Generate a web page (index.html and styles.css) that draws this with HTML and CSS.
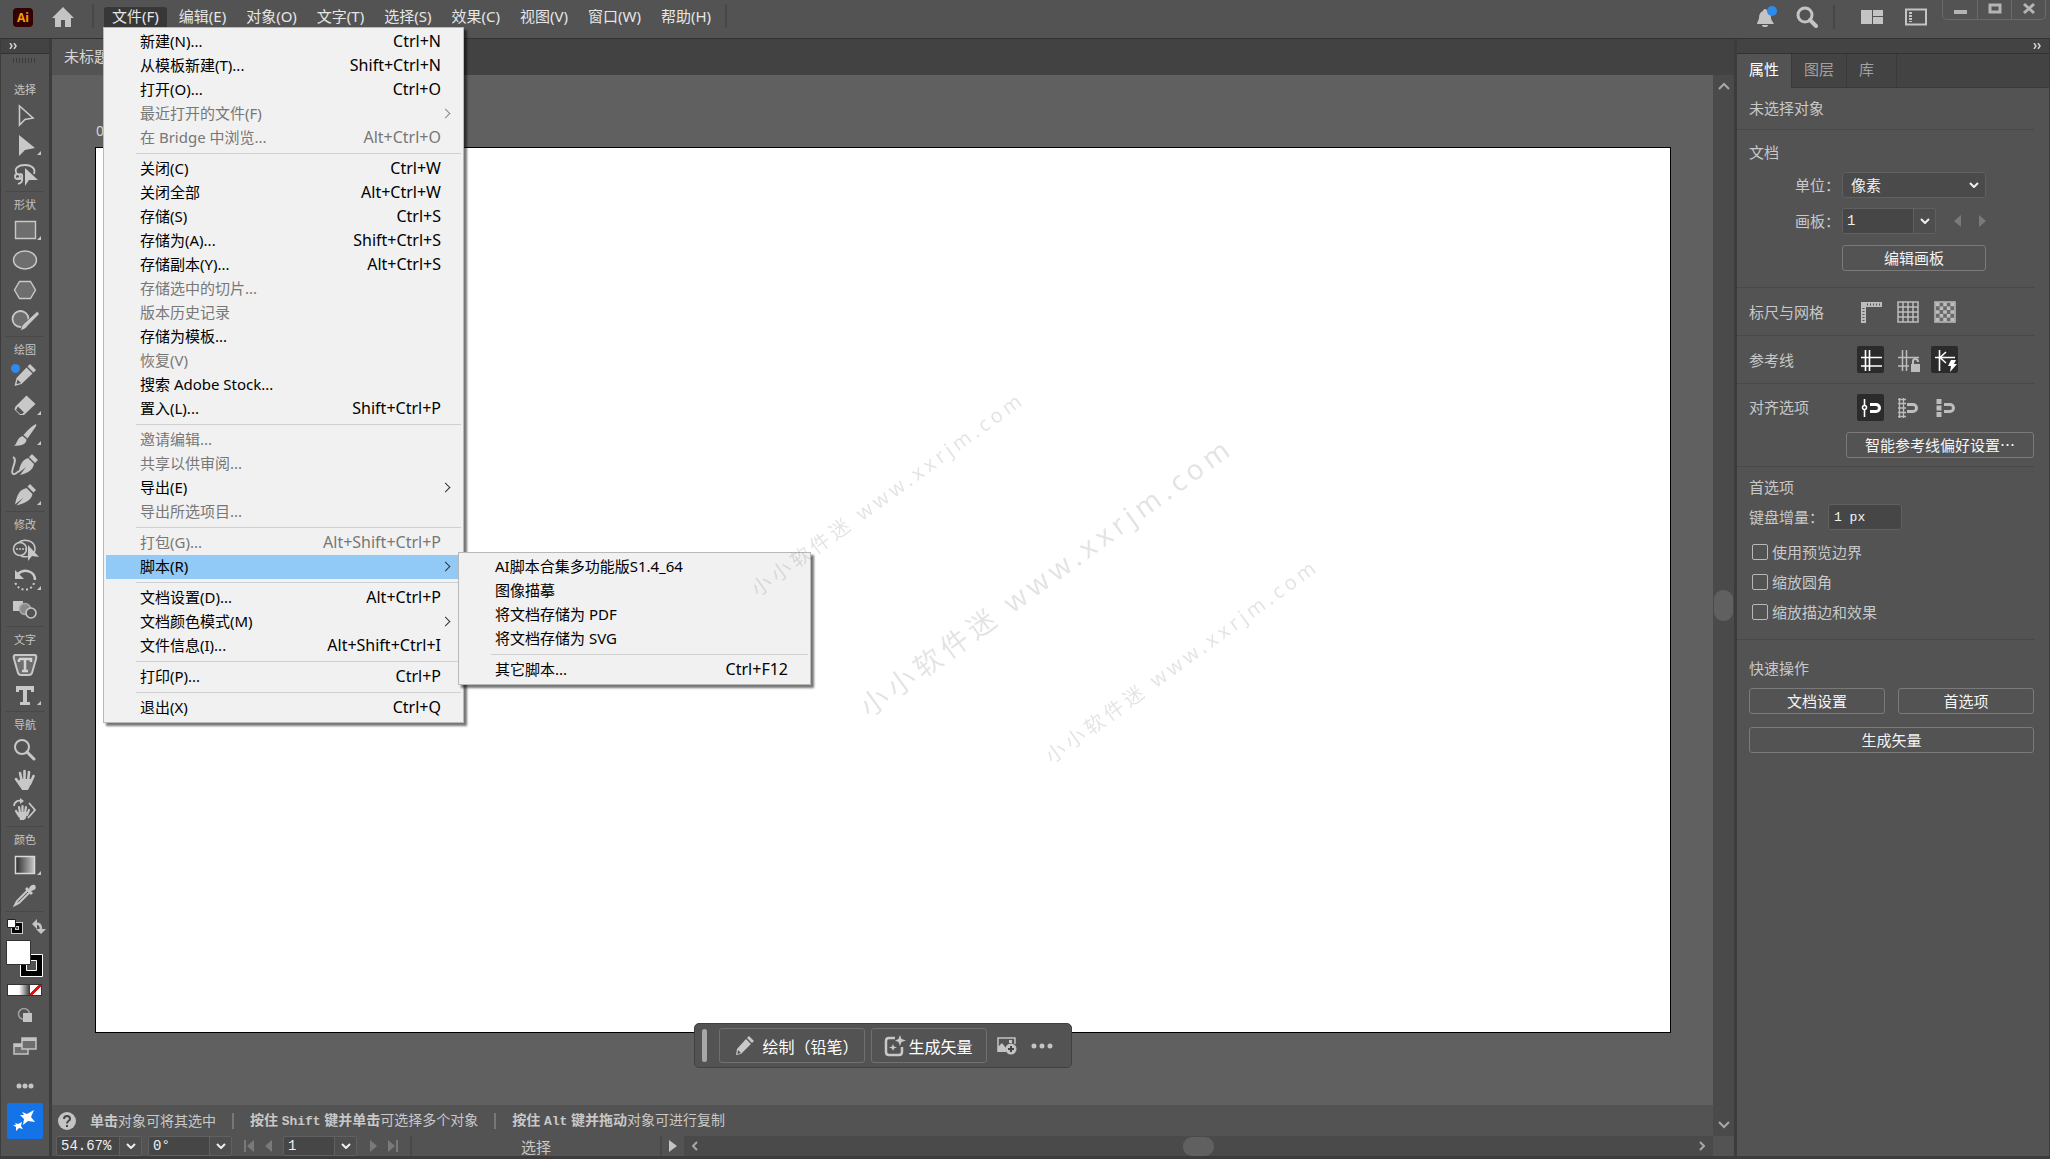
FILE: index.html
```
<!DOCTYPE html>
<html lang="zh-CN">
<head>
  <meta charset="UTF-8" />
  <meta name="viewport" content="width=device-width, initial-scale=1.0"/>
  <title>Illustrator</title>
  <link rel="stylesheet" href="styles.css">
</head>
<body>
  <header class="topbar">
    <span class="app-logo">Ai</span>
    <button class="home" aria-label="主页">
      <svg width="24" height="22" viewBox="0 0 24 22"><path d="M12 1 23 12H20V21H14V14H10V21H4V12H1Z" fill="#c4c4c4"/></svg>
    </button>
    <nav class="menubar">
      <div class="menu-root">
        <button class="menu-title open">文件(F)</button>
        <div class="menu file-menu">
          <button class="item">新建(N)...<span>Ctrl+N</span></button>
          <button class="item">从模板新建(T)...<span>Shift+Ctrl+N</span></button>
          <button class="item">打开(O)...<span>Ctrl+O</span></button>
          <button class="item sub" disabled>最近打开的文件(F)</button>
          <button class="item" disabled>在 Bridge 中浏览...<span>Alt+Ctrl+O</span></button>
          <hr>
          <button class="item">关闭(C)<span>Ctrl+W</span></button>
          <button class="item">关闭全部<span>Alt+Ctrl+W</span></button>
          <button class="item">存储(S)<span>Ctrl+S</span></button>
          <button class="item">存储为(A)...<span>Shift+Ctrl+S</span></button>
          <button class="item">存储副本(Y)...<span>Alt+Ctrl+S</span></button>
          <button class="item" disabled>存储选中的切片...</button>
          <button class="item" disabled>版本历史记录</button>
          <button class="item">存储为模板...</button>
          <button class="item" disabled>恢复(V)</button>
          <button class="item">搜索 Adobe Stock...</button>
          <button class="item">置入(L)...<span>Shift+Ctrl+P</span></button>
          <hr>
          <button class="item" disabled>邀请编辑...</button>
          <button class="item" disabled>共享以供审阅...</button>
          <button class="item sub">导出(E)</button>
          <button class="item" disabled>导出所选项目...</button>
          <hr>
          <button class="item" disabled>打包(G)...<span>Alt+Shift+Ctrl+P</span></button>
          <div class="submenu-root">
            <button class="item sub active">脚本(R)</button>
            <div class="menu script-menu">
              <button class="item">AI脚本合集多功能版S1.4_64</button>
              <button class="item">图像描摹</button>
              <button class="item">将文档存储为 PDF</button>
              <button class="item">将文档存储为 SVG</button>
              <hr>
              <button class="item">其它脚本...<span>Ctrl+F12</span></button>
            </div>
          </div>
          <hr>
          <button class="item">文档设置(D)...<span>Alt+Ctrl+P</span></button>
          <button class="item sub">文档颜色模式(M)</button>
          <button class="item">文件信息(I)...<span>Alt+Shift+Ctrl+I</span></button>
          <hr>
          <button class="item">打印(P)...<span>Ctrl+P</span></button>
          <hr>
          <button class="item">退出(X)<span>Ctrl+Q</span></button>
        </div>
      </div>
      <button class="menu-title">编辑(E)</button>
      <button class="menu-title">对象(O)</button>
      <button class="menu-title">文字(T)</button>
      <button class="menu-title">选择(S)</button>
      <button class="menu-title">效果(C)</button>
      <button class="menu-title">视图(V)</button>
      <button class="menu-title">窗口(W)</button>
      <button class="menu-title">帮助(H)</button>
    </nav>
    <div class="top-actions">
      <button class="bell" aria-label="通知">
        <svg width="22" height="24" viewBox="0 0 22 24"><path d="M9 4a2 2 0 0 1 2 2c3 1 4 4 4 7 0 2 2 4 3 6H1c0-2 2-4 2-6 0-3 1-6 4-7a2 2 0 0 1 2-2Z" fill="#c4c4c4"/><path d="M6 20h6a3 2 0 0 1-6 0Z" fill="#c4c4c4"/><circle cx="16" cy="6" r="5" fill="#2d8ceb"/></svg>
      </button>
      <button class="search" aria-label="搜索">
        <svg width="22" height="22" viewBox="0 0 22 22" fill="none" stroke="#c4c4c4"><circle cx="9" cy="9" r="7" stroke-width="3"/><path d="M14 14 20 20" stroke-width="4" stroke-linecap="round"/></svg>
      </button>
      <button aria-label="排列文档">
        <svg width="24" height="16" viewBox="0 0 24 16" fill="#c4c4c4"><path d="M1 1H12V15H1ZM13 1H23V7H13ZM13 8H23V15H13Z"/></svg>
      </button>
      <button aria-label="切换工作区">
        <svg width="22" height="18" viewBox="0 0 22 18" fill="none" stroke="#c4c4c4" stroke-width="2"><path d="M1 1.500H21V16.500H1Z"/><path d="M5.500 4V14" stroke-width="3" stroke-dasharray="2 1"/></svg>
      </button>
    </div>
    <div class="window-buttons">
      <button aria-label="最小化"><svg width="14" height="14"><path d="M1 9H14V13H1Z" fill="#b4b4b4"/></svg></button>
      <button aria-label="最大化"><svg width="14" height="14"><path d="M2 4H12V11H2Z" fill="none" stroke="#b4b4b4" stroke-width="3"/></svg></button>
      <button aria-label="关闭"><svg width="14" height="14"><path d="M2 3 12 12M12 3 2 12" stroke="#b4b4b4" stroke-width="3"/></svg></button>
    </div>
  </header>

  <div class="workspace">
    <aside class="toolbox">
      <button class="collapse" aria-label="展开工具栏"><svg width="8" height="6" viewBox="0 0 8 6" fill="none" stroke="#d0d0d0" stroke-width="1.500"><path d="M1 0 3 3 1 6M5 0 7 3 5 6"/></svg></button>
      <div class="grip"></div>

      <section class="tools">
        <h2>选择</h2>
        <button aria-label="选择工具"><svg viewBox="0 0 30 30"><path d="M9.500 6V25L15 19.500 23 18Z" fill="none" stroke="#c8c8c8" stroke-width="1.600"/></svg></button>
        <button class="more" aria-label="直接选择工具"><svg viewBox="0 0 30 30"><path d="M9 5V26L15 20 25 18Z" fill="#c8c8c8"/></svg></button>
        <button aria-label="套索工具"><svg viewBox="0 0 30 30"><g fill="none" stroke="#c8c8c8" stroke-width="1.800"><path d="M7 14C3 8 9 5 15 5s11 3 9 9"/><circle cx="7.500" cy="16.500" r="2.500"/><path d="M10 14c3 0 3 4 0 5-2 0-3-1-3-1M12 18c1 3-1 5-4 6"/></g><path d="M15 8V26L19 20 28 20Z" fill="#c8c8c8"/></svg></button>
      </section>
      <section class="tools">
        <h2>形状</h2>
        <button class="more" aria-label="矩形工具"><svg viewBox="0 0 30 30"><path d="M5.500 6.500H25.500V23.500H5.500Z" fill="#6e6e6e" stroke="#c8c8c8" stroke-width="1.400"/></svg></button>
        <button aria-label="椭圆工具"><svg viewBox="0 0 30 30"><ellipse cx="15" cy="15" rx="11.500" ry="9" fill="#6e6e6e" stroke="#c8c8c8" stroke-width="1.400"/></svg></button>
        <button aria-label="多边形工具"><svg viewBox="0 0 30 30"><path d="M9.500 6.500H20.500L25.500 15 20.500 23.500H9.500L4.500 15Z" fill="#6e6e6e" stroke="#c8c8c8" stroke-width="1.400"/></svg></button>
        <button aria-label="Shaper 工具"><svg viewBox="0 0 30 30"><circle cx="10.500" cy="14" r="8" fill="#6e6e6e" stroke="#c8c8c8" stroke-width="1.800"/><path d="M27 6.500Q29.500 7 29 9.500L18 20.500C16.500 23 14 25 10.500 25.500 11 22 12.500 19 15 17.500Z" fill="#c8c8c8" stroke="#535353" stroke-width=".8"/></svg></button>
      </section>
      <section class="tools">
        <h2>绘图</h2>
        <button aria-label="铅笔工具"><svg viewBox="0 0 30 30"><path d="M20 4 26 10 23.500 12.500 17.500 6.500ZM16.500 7.500 22.500 13.500 11.500 24 4.500 26 6.500 18Z" fill="#c8c8c8"/><path d="M7.500 19.500 11 23 6.500 24Z" fill="#535353"/><circle cx="5.500" cy="8.500" r="4.500" fill="#2d8ceb"/></svg></button>
        <button class="more" aria-label="橡皮擦工具"><svg viewBox="0 0 30 30"><path d="M16.500 5.500 25.500 14 14 25H10L4.500 19.500 5.500 16.500Z" fill="#c8c8c8"/><path d="M8 16.500 14 22.500 12 24H10L6 20Z" fill="#535353"/></svg></button>
        <button class="more" aria-label="画笔工具"><svg viewBox="0 0 30 30"><path d="M26 4Q27 5 25.500 7L17.500 18.500 13.500 15Q20 7 26 4ZM12.500 16 16.500 19.500C16.500 24 11 26.500 4 25.500 7.500 24 6.500 18 12.500 16Z" fill="#c8c8c8"/></svg></button>
        <button aria-label="曲率工具"><svg viewBox="0 0 30 30"><path d="M3 7C9 10-1 21 3 24c3 1 4-2 6-3" fill="none" stroke="#c8c8c8" stroke-width="1.800"/><path d="M22 4 28 10 25 13 19 7ZM18 8 24 14C23 20 18 23 10 25L16 17 8.500 23C10 15 12 10 18 8Z" fill="#c8c8c8"/></svg></button>
        <button class="more" aria-label="钢笔工具"><svg viewBox="0 0 30 30"><path d="M20 4 26 10 23.500 12.500 17.500 6.500ZM16.500 8 22.500 14C21.500 20 16 23 6.500 25.500L13.500 17.500 5 24.500C7 15 9 10 16.500 8Z" fill="#c8c8c8"/></svg></button>
      </section>
      <section class="tools">
        <h2>修改</h2>
        <button aria-label="形状生成器工具"><svg viewBox="0 0 30 30"><g fill="none" stroke="#c8c8c8" stroke-width="1.500"><circle cx="10" cy="14" r="6.500"/><path d="M8 8C13 3 25 5 25 14c0 7-9 9-14 7"/><path d="M6 14H20" stroke-dasharray="2 1"/></g><path d="M18 10V26L22 21 29 22Z" fill="#c8c8c8"/></svg></button>
        <button class="more" aria-label="旋转工具"><svg viewBox="0 0 30 30"><path d="M8 9C14 3 25 6 25 15" fill="none" stroke="#c8c8c8" stroke-width="2.500"/><path d="M5 5V14H14Z" fill="#c8c8c8"/><path d="M24 18C22 26 9 28 5 17" fill="none" stroke="#c8c8c8" stroke-width="2" stroke-dasharray="2 2.500"/></svg></button>
        <button aria-label="混合工具"><svg viewBox="0 0 30 30"><path d="M3 6H13V16H3Z" fill="#c8c8c8"/><circle cx="15" cy="14" r="5.500" fill="#8a8a8a" stroke="#a8a8a8" stroke-width="1.500"/><circle cx="21" cy="18" r="5" fill="#535353" stroke="#c8c8c8" stroke-width="1.600"/></svg></button>
      </section>
      <section class="tools">
        <h2>文字</h2>
        <button aria-label="修饰文字工具"><svg viewBox="0 0 30 30"><path d="M5 5H25Q27 6 26 9L22 23Q21 25 19 25H11Q9 25 8 23L4 9Q3 6 5 5Z" fill="#6e6e6e" stroke="#c8c8c8" stroke-width="2"/><path d="M9 9H21V12M9 12V9M15 9V21M12 21H18" fill="none" stroke="#d2d2d2" stroke-width="2.500"/></svg></button>
        <button class="more" aria-label="文字工具"><svg viewBox="0 0 30 30"><path d="M6 6H24V12H21V10H17V22H20V25H10V22H13V10H9V12H6Z" fill="#c8c8c8"/></svg></button>
      </section>
      <section class="tools">
        <h2>导航</h2>
        <button aria-label="缩放工具"><svg viewBox="0 0 30 30" fill="none" stroke="#c8c8c8"><circle cx="12" cy="12" r="7" stroke-width="2"/><path d="M17 17 24 24" stroke-width="3" stroke-linecap="round"/></svg></button>
        <button aria-label="抓手工具"><svg viewBox="0 0 30 30"><g stroke="#c8c8c8" stroke-width="2.600" stroke-linecap="round" fill="none"><path d="M10 8 12 17M14.500 6V16M19 7 18 17M23.500 11 20 19M6 14 11 21"/></g><path d="M10 14H21L20 21 18 25H12L8 18Z" fill="#c8c8c8"/></svg></button>
        <button aria-label="旋转视图工具"><svg viewBox="0 0 30 30"><g stroke="#c8c8c8" stroke-width="2.200" stroke-linecap="round" fill="none"><path d="M9 12 10 18M12.500 11V18M16 12 15 18M19 15 17 20M6 16 9 21"/></g><path d="M8 17H17L16 23 14 25H10Z" fill="#c8c8c8"/><path d="M4 11C4 7 8 5 11 6M19 8 25 15 18 23" fill="none" stroke="#c8c8c8" stroke-width="1.800"/><path d="M10 3 14 6 10 9Z" fill="#c8c8c8"/></svg></button>
      </section>
      <section class="tools">
        <h2>颜色</h2>
        <button class="more" aria-label="渐变工具"><svg viewBox="0 0 30 30"><defs><linearGradient id="ramp"><stop offset="0" stop-color="#2a2a2a"/><stop offset="1" stop-color="#c8c8c8"/></linearGradient></defs><path d="M5.500 6.500H24.500V23.500H5.500Z" fill="url(#ramp)" stroke="#d8d8d8" stroke-width="1.500"/></svg></button>
        <button aria-label="吸管工具"><svg viewBox="0 0 30 30"><path d="M18 10 20 12 9 23 5 25 7 21Z" fill="none" stroke="#c8c8c8" stroke-width="2"/><path d="M15 9 17 7 19 9C20 4 25 4 25.500 6S26 10 21 11L23 13 21 15Z" fill="#c8c8c8"/></svg></button>
      </section>

      <div class="swatches">
        <button class="swatch-row" aria-label="互换填色和描边"><svg width="38" height="62" viewBox="0 0 38 62"><path d="M6.500 8.500H13.500V15.500H6.500Z" fill="none" stroke="#ccc" stroke-width="5"/><path d="M6.500 8.500H13.500V15.500H6.500Z" fill="none" stroke="#000" stroke-width="3"/><path d="M.500 3.500H8.500V11.500H.500Z" fill="#fff" stroke="#222"/><path d="M27 8C33 7 34 9 34 14" fill="none" stroke="#c4c4c4" stroke-width="2.500"/><path d="M30 3V13L25 8ZM29 13H39L34 18Z" fill="#c4c4c4"/><path d="M13.500 38.500H35.500V60.500H13.500Z" fill="#000" stroke="#fff"/><path d="M19.500 44.500H29.500V54.500H19.500Z" fill="#535353" stroke="#fff"/><path d="M-.500 24.500H23.500V48.500H-.500Z" fill="#fff" stroke="#333"/></svg></button>
        <div class="color-modes">
          <button class="solid" aria-label="颜色"></button><button class="gradient" aria-label="渐变"></button><button class="none" aria-label="无"></button>
        </div>
        <button class="draw-mode" aria-label="绘图模式"><svg width="16" height="16"><circle cx="7" cy="7" r="5.500" fill="#535353" stroke="#a0a0a0" stroke-width="1.500"/><path d="M6 6H15V15H6Z" fill="#c4c4c4"/></svg></button>
        <button class="screen-mode" aria-label="更改屏幕模式"><svg width="24" height="18"><path d="M1 7H15V17H1Z" fill="#6e6e6e" stroke="#c4c4c4" stroke-width="1.500"/><path d="M1 7H15V10H1Z" fill="#c4c4c4"/><path d="M9 1H23V12H9Z" fill="#6e6e6e" stroke="#c4c4c4" stroke-width="1.500"/><path d="M9 1H23V4H9Z" fill="#c4c4c4"/></svg></button>
        <button class="edit-tools" aria-label="编辑工具栏"><svg width="18" height="6" fill="#c4c4c4"><circle cx="3" cy="3" r="2.500"/><circle cx="9" cy="3" r="2.500"/><circle cx="15" cy="3" r="2.500"/></svg></button>
      </div>
      <button class="ai-button" aria-label="生成"><svg width="24" height="24" viewBox="0 0 24 24" fill="#fff"><path d="M9 3 14 5 21 1 18 8 22 13 15 12 10 16 11 10 7 6 11 6ZM2 14 5 15 9 13 8 17 10 20 6 19 3 22 3 18 0 16 3 16Z"/></svg></button>
    </aside>

    <main class="document">
      <div class="doc-tabs"><button class="doc-tab">未标题</button></div>
      <div class="view">
        <div class="stage">
          <span class="artboard-name">0</span>
          <div class="artboard"></div>
          <div class="context-bar">
            <span class="handle"></span>
            <button class="boxed"><svg width="20" height="22" viewBox="0 0 20 22"><path d="M14 1 19 6 17 8 12 3ZM11 4 16 9 6 19 1 20 2 14Z" fill="#c8c8c8"/><path d="M3 15 6 18 2.500 19Z" fill="#535353"/></svg>绘制（铅笔）</button>
            <button class="boxed vector"><svg width="22" height="22" viewBox="0 0 22 22"><path d="M11 3H5Q2 3 2 6V17Q2 20 5 20H15Q18 20 18 17V12" fill="none" stroke="#c8c8c8" stroke-width="2.500"/><path d="M16 0 17.500 4 22 5.500 17.500 7 16 11 14.500 7 11 5.500 14.500 4ZM9 9 10 11.500 13 12.500 10 13.500 9 16 8 13.500 5 12.500 8 11.500Z" fill="#c8c8c8"/></svg>生成矢量</button>
            <button class="bare" aria-label="置入图像"><svg width="20" height="18" viewBox="0 0 20 18"><path d="M1 15V1H18V7" fill="none" stroke="#c4c4c4" stroke-width="1.500"/><path d="M1 15V10L5 6 9 11V15ZM12 3H15V6H12Z" fill="#c4c4c4"/><circle cx="14" cy="12" r="5.500" fill="#c4c4c4"/><path d="M14 9V15M11 12H17" stroke="#444" stroke-width="2"/></svg></button>
            <button class="bare" aria-label="更多选项"><svg width="22" height="6" fill="#c4c4c4"><circle cx="3" cy="3" r="2.500"/><circle cx="11" cy="3" r="2.500"/><circle cx="19" cy="3" r="2.500"/></svg></button>
          </div>
        </div>
        <div class="hints">
          <svg width="18" height="18"><circle cx="9" cy="9" r="9" fill="#c4c4c4"/><path d="M6 7Q6 4 9 4T12 7Q12 8 10.500 9T9 11.500M9 13V15" fill="none" stroke="#444" stroke-width="2"/></svg>
          <p><b>单击</b>对象可将其选中</p>
          <p><b>按住 <kbd>Shift</kbd> 键并单击</b>可选择多个对象</p>
          <p><b>按住 <kbd>Alt</kbd> 键并拖动</b>对象可进行复制</p>
        </div>
        <div class="vscroll">
          <svg width="12" height="8"><path d="M1 7 6 2 11 7"/></svg>
          <span class="thumb"></span>
          <svg width="12" height="8"><path d="M1 1 6 6 11 1"/></svg>
        </div>
      </div>
      <footer class="status">
        <div class="combo zoom"><input value="54.67%" aria-label="缩放级别"><button aria-label="选择缩放级别"><svg class="chev" width="10" height="6"><path d="M1 1 5 5 9 1"/></svg></button></div>
        <div class="combo angle"><input value="0°" aria-label="旋转角度"><button aria-label="选择角度"><svg class="chev" width="10" height="6"><path d="M1 1 5 5 9 1"/></svg></button></div>
        <div class="pager">
          <button aria-label="首项"><svg width="12" height="12"><path d="M1 0H3V12H1ZM11 0V12L4 6Z"/></svg></button>
          <button aria-label="上一项"><svg width="8" height="12"><path d="M7 0V12L0 6Z"/></svg></button>
        </div>
        <div class="combo page"><input value="1" aria-label="画板导航"><button aria-label="选择画板"><svg class="chev" width="10" height="6"><path d="M1 1 5 5 9 1"/></svg></button></div>
        <div class="pager next">
          <button aria-label="下一项"><svg width="8" height="12"><path d="M1 0V12L8 6Z"/></svg></button>
          <button aria-label="末项"><svg width="12" height="12"><path d="M9 0H11V12H9ZM1 0V12L8 6Z"/></svg></button>
        </div>
        <span class="tool-name">选择</span>
        <button class="play" aria-label="状态栏显示"><svg width="8" height="12"><path d="M0 0V12L8 6Z" fill="#c4c4c4"/></svg></button>
        <div class="hscroll">
          <svg width="8" height="12"><path d="M6 2 2 6 6 10"/></svg>
          <span class="thumb"></span>
          <svg width="8" height="12"><path d="M2 2 6 6 2 10"/></svg>
        </div>
        <span class="corner"></span>
      </footer>
    </main>

    <aside class="panel">
      <button class="collapse" aria-label="折叠面板"><svg width="8" height="6" viewBox="0 0 8 6" fill="none" stroke="#d0d0d0" stroke-width="1.500"><path d="M1 0 3 3 1 6M5 0 7 3 5 6"/></svg></button>
      <div class="panel-tabs">
        <button class="selected">属性</button>
        <button>图层</button>
        <button>库</button>
      </div>
      <section class="none-selected"><h3>未选择对象</h3></section>
      <section class="doc-section">
        <h3>文档</h3>
        <div class="field">
          <label for="unit">单位：</label>
          <div class="select"><select id="unit"><option>像素</option></select><svg class="chev" width="10" height="6"><path d="M1 1 5 5 9 1"/></svg></div>
        </div>
        <div class="field">
          <label for="board">画板：</label>
          <div class="combo board"><input id="board" value="1"><button aria-label="选择画板"><svg class="chev" width="10" height="6"><path d="M1 1 5 5 9 1"/></svg></button></div>
          <div class="arrows">
            <button aria-label="上一个画板"><svg width="7" height="12"><path d="M7 0V12L0 6Z" fill="#7a7a7a"/></svg></button>
            <button aria-label="下一个画板"><svg width="7" height="12"><path d="M0 0V12L7 6Z" fill="#7a7a7a"/></svg></button>
          </div>
        </div>
        <button class="outline edit-board">编辑画板</button>
      </section>
      <section class="icon-row">
        <h3>标尺与网格</h3>
        <div class="toggles">
          <button aria-label="显示标尺"><svg viewBox="0 0 27 27"><path d="M4 4H25V9H9V25H4Z" fill="#bdbdbd"/><path d="M10 6.500H24M6.500 10V24" stroke="#535353" stroke-width="2" stroke-dasharray="1 2"/></svg></button>
          <button aria-label="显示网格"><svg viewBox="0 0 27 27" fill="none" stroke="#bdbdbd" stroke-width="1.500"><path d="M4 4H24V24H4ZM9 4V24M14 4V24M19 4V24M4 9H24M4 14H24M4 19H24"/></svg></button>
          <button aria-label="显示透明度网格"><svg viewBox="0 0 27 27"><path d="M4 4H24V24H4Z" fill="#6a6a6a" stroke="#bdbdbd" stroke-width="1.500"/><path d="M5 6.500H23M5 14H23M5 21.500H23" stroke="#bdbdbd" stroke-width="3.500" stroke-dasharray="3.600 3.600"/><path d="M8.600 10.250H23M8.600 17.750H23" stroke="#bdbdbd" stroke-width="3.500" stroke-dasharray="3.600 3.600"/></svg></button>
        </div>
      </section>
      <section class="icon-row">
        <h3>参考线</h3>
        <div class="toggles">
          <button class="on" aria-label="显示参考线"><svg viewBox="0 0 27 27" stroke="#fff" stroke-width="1.600"><path d="M8.500 4V25M12.500 4V25M4 11.500H25M4 20H25"/></svg></button>
          <button aria-label="锁定参考线"><svg viewBox="0 0 27 27"><path d="M8.500 4V25M12.500 4V25M4 11.500H25M4 20H15" stroke="#bdbdbd" stroke-width="1.500"/><path d="M15 16H27V27H15Z" fill="#535353"/><path d="M17 18H26V26H17Z" fill="#bdbdbd"/><path d="M19 18V15Q19 13 21.500 13T24 16" fill="none" stroke="#bdbdbd" stroke-width="2"/></svg></button>
          <button class="on" aria-label="智能参考线"><svg viewBox="0 0 27 27"><path d="M8.500 4V25M4 11.500H24M9 11.500 15 6M9 11.500 15 17" fill="none" stroke="#fff" stroke-width="1.600"/><path d="M20 14H25L23 18H26L19 26 20 20H17Z" fill="#fff"/></svg></button>
        </div>
      </section>
      <section class="snap">
        <div class="icon-row">
          <h3>对齐选项</h3>
          <div class="toggles">
            <button class="on" aria-label="对齐点"><svg viewBox="0 0 27 27" fill="none" stroke="#fff"><path d="M7.500 5V11M7.500 16V23" stroke-width="1.600"/><circle cx="7.500" cy="13.500" r="2" stroke-width="1.500"/><path d="M13 10.500H19A3 3 0 0 1 19 17.500H13" stroke-width="3"/></svg></button>
            <button aria-label="对齐网格"><svg viewBox="0 0 27 27" fill="none" stroke="#bdbdbd"><path d="M5.500 4V24M9.500 4V24M4 5.500H12M4 9.500H12M4 14H12M4 18.500H12M4 22.500H12" stroke-width="1.300"/><path d="M13 10.500H19A3 3 0 0 1 19 17.500H13" stroke-width="3"/></svg></button>
            <button aria-label="对齐像素"><svg viewBox="0 0 27 27" fill="none" stroke="#bdbdbd"><path d="M8 5V23" stroke-width="5" stroke-dasharray="5 1.500"/><path d="M13 10.500H19A3 3 0 0 1 19 17.500H13" stroke-width="3"/></svg></button>
          </div>
        </div>
        <button class="outline smart">智能参考线偏好设置…</button>
      </section>
      <section class="prefs">
        <h3>首选项</h3>
        <div class="increment"><label for="step">键盘增量：</label><input id="step" value="1 px"></div>
        <label class="check"><input type="checkbox">使用预览边界</label>
        <label class="check"><input type="checkbox">缩放圆角</label>
        <label class="check"><input type="checkbox">缩放描边和效果</label>
      </section>
      <section class="quick">
        <h3>快速操作</h3>
        <div class="quick-grid">
          <button class="outline">文档设置</button>
          <button class="outline">首选项</button>
          <button class="outline wide">生成矢量</button>
        </div>
      </section>
    </aside>
  </div>

  <div class="watermark small first">小小软件迷 www.xxrjm.com</div>
  <div class="watermark center">小小软件迷 www.xxrjm.com</div>
  <div class="watermark small last">小小软件迷 www.xxrjm.com</div>
</body>
</html>
```
FILE: styles.css
```
* {
  margin: 0;
  padding: 0;
  box-sizing: border-box;
}

body {
  height: 100vh;
  display: flex;
  flex-direction: column;
  overflow: hidden;
  background: #535353;
  color: #d6d6d6;
  font-family: "Noto Sans", "Noto Sans CJK SC", sans-serif;
  font-size: 15px;
  line-height: 20px;
}

button, input, select {
  font: inherit;
  color: inherit;
  background: none;
  border: none;
  outline: none;
}

button {
  display: flex;
  align-items: center;
  justify-content: center;
  white-space: nowrap;
}

svg {
  display: block;
  flex: none;
}

h2, h3 {
  font-size: 15px;
  font-weight: normal;
}

/* top bar */
.topbar {
  height: 38px;
  flex: none;
  display: flex;
  align-items: flex-start;
  padding-left: 13px;
}

.app-logo {
  width: 20px;
  height: 19px;
  margin-top: 8px;
  border-radius: 4px;
  background: #330000;
  color: #ff9a00;
  font: bold 12px/19px "Open Sans", sans-serif;
  text-align: center;
}

.home {
  margin: 6px 16px 0 18px;
}

.menubar {
  display: flex;
  gap: 4px;
  margin-left: 1px;
  padding: 7px 0 0 12px;
  position: relative;
}

.menubar::before, .menubar::after, .search::after {
  content: "";
  position: absolute;
  top: 4px;
  left: 0;
  width: 2px;
  height: 24px;
  background: #474747;
}

.menubar::after {
  left: auto;
  right: -8px;
}

.menu-root {
  position: relative;
  z-index: 5;
}

.menu-title {
  height: 20px;
  padding: 0 8px 2px;
  color: #e6e6e6;
}

.menu-title.open {
  background: #373737;
  border-radius: 3px 3px 0 0;
}

.top-actions {
  display: flex;
  align-items: center;
  margin-left: auto;
  height: 34px;
}

.top-actions button {
  width: 24px;
  margin-right: 20px;
}

.top-actions .bell {
  margin-right: 16px;
}

.top-actions .search {
  position: relative;
  margin-right: 41px;
}

.search::after {
  top: -1px;
  left: 38px;
}

.window-buttons {
  display: flex;
  margin: 0 4px 0 -6px;
  border: 1px solid #6a6a6a;
  border-top: none;
  border-radius: 0 0 5px 5px;
}

.window-buttons button {
  width: 34px;
  height: 19px;
  padding-bottom: 3px;
  border-left: 1px solid #6a6a6a;
}

.window-buttons button:first-child {
  border-left: none;
}

/* drop-down menus */
.menu {
  position: absolute;
  padding: 2px;
  background: #f1f1f1;
  border: 1px solid #b8b8b8;
  box-shadow: 3px 3px 2px #0008;
  color: #000;
}

.file-menu {
  top: 20px;
  left: -1px;
  width: 361px;
}

.script-menu {
  top: -3px;
  left: 352px;
  width: 353px;
}

.submenu-root {
  position: relative;
}

.item {
  position: relative;
  display: flex;
  justify-content: space-between;
  width: 100%;
  height: 24px;
  padding: 0 20px 2px 34px;
}

.item span {
  font-size: 16px;
}

.item:disabled {
  color: #777;
}

.item.active {
  background: #91c9f7;
}

.item.sub::after {
  content: "";
  position: absolute;
  right: 12px;
  top: 8px;
  width: 6px;
  height: 6px;
  border: solid #333;
  border-width: 1px 1px 0 0;
  transform: rotate(45deg);
}

.item.sub:disabled::after {
  border-color: #888;
}

.menu hr {
  height: 1px;
  margin: 3px 0 3px 30px;
  border: none;
  background: #d0d0d0;
}

/* main columns */
.workspace {
  flex: 1;
  min-height: 0;
  display: flex;
  border-top: 1px solid #323232;
  border-bottom: 3px solid #3c3c3c;
}

.collapse {
  width: 100%;
  height: 15px;
  flex: none;
  background: #434343;
  border-bottom: 1px solid #323232;
  justify-content: flex-start;
  padding-left: 8px;
}

.toolbox {
  width: 52px;
  flex: none;
  display: flex;
  flex-direction: column;
  border: solid #3c3c3c;
  border-width: 0 3px 0 1px;
}

.grip {
  width: 24px;
  height: 5px;
  margin: 4px 0 14px 12px;
  background: repeating-linear-gradient(90deg, #3c3c3c 0 1px, transparent 1px 3px);
}

.tools {
  display: flex;
  flex-direction: column;
  margin: 0 5px;
  padding-bottom: 1px;
  border-bottom: 1px solid #484848;
}

.tools h2 {
  height: 23px;
  color: #c4c4c4;
  font-size: 11px;
  line-height: 25px;
  text-align: center;
}

.tools button {
  position: relative;
  height: 30px;
}

.tools svg {
  width: 30px;
  height: 30px;
}

.tools .more::after {
  content: "";
  position: absolute;
  right: 3px;
  bottom: 5px;
  border: solid transparent;
  border-width: 0 0 4px 4px;
  border-bottom-color: #c8c8c8;
}

.swatches {
  display: flex;
  flex-direction: column;
  align-items: flex-start;
  margin: 4px 6px 14px;
}

.swatch-row svg {
  overflow: visible;
}

.color-modes {
  display: flex;
  margin-top: 6px;
  border: 1px solid #333;
}

.color-modes button {
  width: 11px;
  height: 10px;
  background: #fff;
}

.color-modes .gradient {
  background: linear-gradient(90deg, #fff, #333);
}

.color-modes .none {
  background: linear-gradient(135deg, #fff 40%, #e01010 40% 60%, #fff 60%);
}

.draw-mode, .screen-mode, .edit-tools {
  align-self: center;
  margin-top: 11px;
}

.screen-mode {
  margin-top: 14px;
}

.edit-tools {
  margin-top: 28px;
}

.ai-button {
  width: 36px;
  height: 36px;
  flex: none;
  margin-left: 6px;
  border-radius: 2px;
  background: #1473e6;
}

/* document */
.document {
  flex: 1;
  min-width: 0;
  display: flex;
  flex-direction: column;
}

.doc-tabs {
  height: 36px;
  flex: none;
  display: flex;
  background: #424242;
}

.doc-tab {
  justify-content: flex-start;
  width: 320px;
  padding: 0 12px 2px;
  background: #535353;
}

.view {
  flex: 1;
  min-height: 0;
  display: grid;
  grid-template-columns: 1fr 21px;
  grid-template-rows: 1fr 31px;
}

.stage {
  position: relative;
  display: flex;
  padding: 72px 42px 72px 43px;
  background: #606060;
}

.artboard {
  flex: 1;
  background: #fff;
  border: 1px solid #000;
}

.artboard-name {
  position: absolute;
  top: 46px;
  left: 44px;
  font-size: 14px;
}

.context-bar {
  position: absolute;
  bottom: 37px;
  left: 50%;
  transform: translateX(-50%);
  display: flex;
  align-items: center;
  gap: 6px;
  height: 45px;
  padding: 0 14px 0 7px;
  background: #535353;
  border: 1px solid #404040;
  border-radius: 5px;
  color: #fff;
  font: 16px/24px "Noto Sans CJK SC", sans-serif;
}

.handle {
  width: 5px;
  height: 33px;
  margin-right: 6px;
  border-radius: 3px;
  background: #a8a8a8;
}

.boxed {
  gap: 8px;
  height: 35px;
  padding: 0 5px 0 15px;
  border: 1px solid #707070;
  border-radius: 3px;
}

.boxed.vector {
  gap: 3px;
  padding: 0 13px 0 12px;
}

.bare {
  width: 29px;
  height: 35px;
}

.hints {
  display: flex;
  align-items: center;
  padding-left: 6px;
  color: #c8c8c8;
  font-size: 14px;
  white-space: nowrap;
}

.hints p {
  padding: 0 16px;
  line-height: 14px;
}

.hints svg {
  margin-right: -2px;
}

.hints p + p {
  border-left: 2px solid #777;
}

.hints kbd {
  font: bold 13px/14px "Liberation Mono", monospace;
}

.vscroll {
  grid-row: 1 / 3;
  grid-column: 2;
  display: flex;
  flex-direction: column;
  align-items: center;
  justify-content: space-between;
  padding: 7px 0;
  background: #4a4a4a;
}

.vscroll svg, .hscroll svg {
  fill: none;
  stroke: #a8a8a8;
  stroke-width: 2;
}

.vscroll .thumb {
  width: 19px;
  height: 31px;
  border-radius: 9px;
  background: #606060;
}

.status {
  height: 20px;
  flex: none;
  display: flex;
}

.combo {
  display: flex;
  height: 20px;
  background: #464646;
  border: 1px solid #606060;
  border-radius: 2px;
  color: #f0f0f0;
}

.combo input {
  flex: 1;
  min-width: 0;
  padding-left: 4px;
  font: 14px/18px "Liberation Mono", monospace;
}

.combo button {
  width: 22px;
  background: #4e4e4e;
  border-left: 1px solid #606060;
}

.chev {
  fill: none;
  stroke: #f0f0f0;
  stroke-width: 2;
}

.zoom {
  width: 86px;
  margin: 0 6px 0 4px;
}

.angle {
  width: 84px;
}

.page {
  width: 74px;
}

.pager {
  display: flex;
  align-items: center;
  justify-content: center;
  gap: 10px;
  width: 51px;
  fill: #7a7a7a;
}

.pager.next {
  width: 53px;
}

.tool-name {
  width: 252px;
  border: solid #484848;
  border-width: 0 2px;
  text-align: center;
  line-height: 23px;
  color: #c8c8c8;
}

.play {
  width: 22px;
}

.hscroll {
  flex: 1;
  display: flex;
  align-items: center;
  justify-content: space-between;
  padding: 0 7px;
  background: #4a4a4a;
}

.hscroll .thumb {
  width: 31px;
  height: 19px;
  border-radius: 9px;
  background: #606060;
}

.corner {
  width: 21px;
}

/* properties panel */
.panel {
  width: 316px;
  flex: none;
  border: solid #3c3c3c;
  border-width: 0 1px 0 3px;
  color: #c8c8c8;
  font-family: "Noto Sans CJK SC", sans-serif;
}

.panel .collapse {
  justify-content: flex-end;
  padding-right: 8px;
}

.panel-tabs {
  display: flex;
  height: 34px;
  background: #434343;
  border-bottom: 1px solid #3a3a3a;
}

.panel-tabs button {
  height: 34px;
  padding: 0 12px 5px;
  color: #a0a0a0;
  border-right: 1px solid #3a3a3a;
}

.panel-tabs button:last-child {
  padding-right: 22px;
}

.panel-tabs .selected {
  background: #535353;
  color: #fff;
}

.panel section {
  margin-right: 15px;
  padding-left: 12px;
  border-bottom: 1px solid #484848;
}

.panel section:last-child {
  border-bottom: none;
}

.panel .none-selected {
  padding: 10px 12px 11px;
}

.panel .doc-section {
  padding: 12px 48px 16px 12px;
}

.field {
  display: flex;
  align-items: center;
  height: 26px;
  margin: 10px 0 0 46px;
}

.field label {
  width: 47px;
}

.select {
  flex: 1;
  display: flex;
  align-items: center;
  height: 26px;
  padding-right: 6px;
  background: #4a4a4a;
  border: 1px solid #606060;
  border-radius: 3px;
  color: #f0f0f0;
}

.select select {
  flex: 1;
  appearance: none;
  padding-left: 8px;
}

.board {
  width: 94px;
  height: 26px;
}

.arrows {
  flex: 1;
  display: flex;
  justify-content: flex-end;
  gap: 18px;
}

.outline {
  height: 26px;
  border: 1px solid #7a7a7a;
  border-radius: 3px;
  color: #f4f4f4;
}

.edit-board {
  width: 144px;
  margin: 11px 0 0 auto;
}

.icon-row {
  display: flex;
  align-items: center;
  justify-content: space-between;
  height: 48px;
}

.toggles {
  display: flex;
  gap: 10px;
  margin-right: 76px;
}

.toggles button, .toggles svg {
  width: 27px;
  height: 27px;
}

.toggles .on {
  background: #2b2b2b;
  border-radius: 2px;
}

.panel .snap {
  padding-bottom: 8px;
}

.snap .icon-row {
  height: 46px;
}

.smart {
  width: 188px;
  margin: 2px 0 0 auto;
}

.prefs {
  padding: 10px 0 12px;
}

.increment {
  display: flex;
  align-items: center;
  margin: 7px 0;
}

.increment input {
  width: 74px;
  height: 26px;
  margin-left: 4px;
  padding-left: 5px;
  background: #464646;
  border: 1px solid #606060;
  border-radius: 3px;
  color: #f4f4f4;
  font: 13px/18px "Liberation Mono", monospace;
}

.check {
  display: flex;
  align-items: center;
  height: 30px;
  gap: 4px;
  padding-left: 3px;
}

.check input {
  appearance: none;
  width: 16px;
  height: 16px;
  border: 1px solid #b8b8b8;
  border-radius: 2px;
}

.quick {
  padding-top: 18px;
}

.quick-grid {
  display: grid;
  grid-template-columns: 1fr 1fr;
  gap: 13px;
  margin-top: 10px;
}

.wide {
  grid-column: 1 / 3;
}

/* watermark */
.watermark {
  position: fixed;
  z-index: 10;
  transform: translate(-50%, -50%) rotate(-36deg);
  color: #0000001c;
  font-size: 28px;
  line-height: 36px;
  letter-spacing: 5px;
  white-space: nowrap;
  pointer-events: none;
}

.watermark.small {
  font-size: 20px;
  letter-spacing: 4px;
}

.center {
  top: 576px;
  left: 1046px;
}

.first {
  top: 494px;
  left: 888px;
}

.last {
  top: 661px;
  left: 1182px;
}
```
